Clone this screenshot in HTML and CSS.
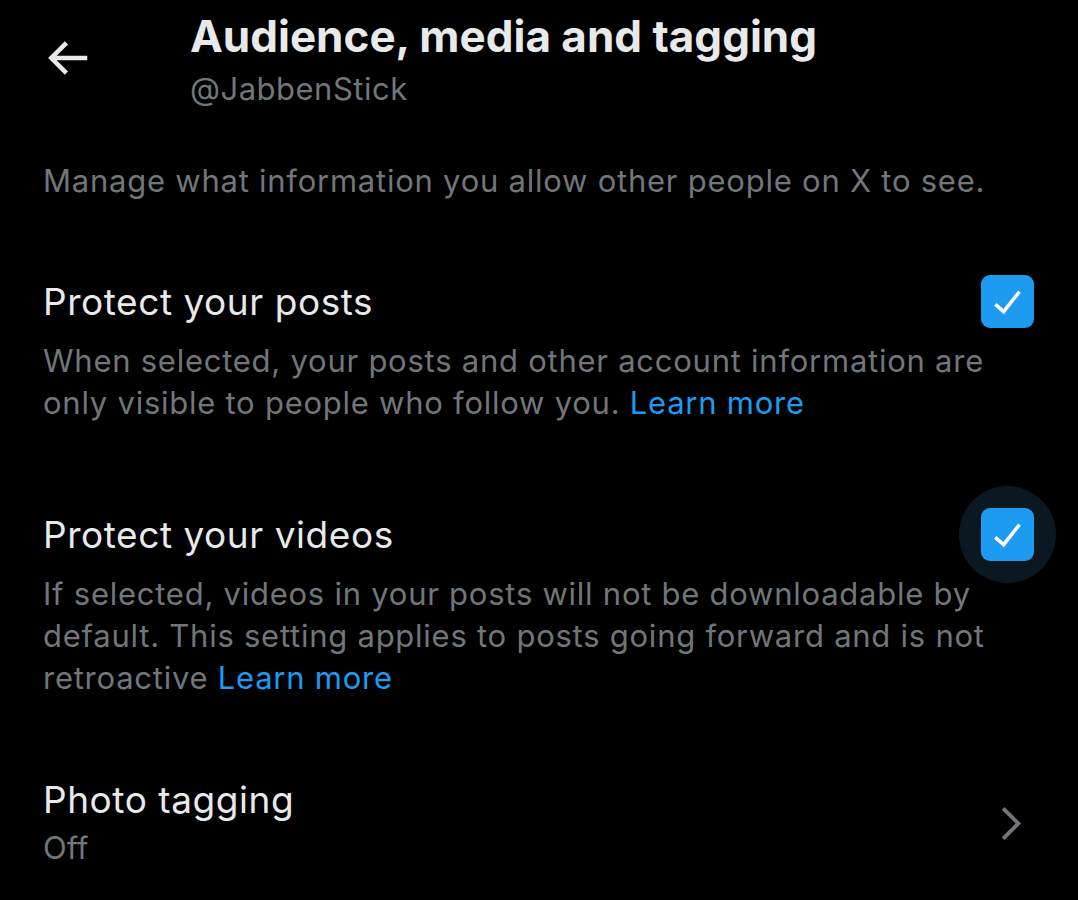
FILE: index.html
```html
<!DOCTYPE html>
<html>
<head>
<meta charset="utf-8">
<link rel="stylesheet" href="styles.css">
</head>
<body>
<div class="page">
  <header class="header">
    <div class="back">
      <svg viewBox="0 0 24 24" width="54" height="54"><path d="M7.414 13l5.043 5.04-1.414 1.42L3.586 12l7.457-7.46 1.414 1.42L7.414 11H21v2H7.414z" fill="#e7e9ea"/></svg>
    </div>
    <div class="titles">
      <div class="title">Audience, media and tagging</div>
      <div class="handle">@JabbenStick</div>
    </div>
  </header>
  <p class="intro">Manage what information you allow other people on X to see.</p>

  <section class="setting">
    <div class="row">
      <div class="label">Protect your posts</div>
      <div class="check-wrap"><div class="check"><svg viewBox="0 0 24 24" width="42" height="42"><path d="M9.64 18.952l-5.55-4.861 1.317-1.504 3.951 3.459 8.402-10.548 1.563 1.246-9.683 12.208z" fill="#fff"/></svg></div></div>
    </div>
    <p class="desc">When selected, your posts and other account information are only visible to people who follow you. <span class="link">Learn more</span></p>
  </section>

  <section class="setting">
    <div class="row">
      <div class="label">Protect your videos</div>
      <div class="check-wrap focused"><div class="check"><svg viewBox="0 0 24 24" width="42" height="42"><path d="M9.64 18.952l-5.55-4.861 1.317-1.504 3.951 3.459 8.402-10.548 1.563 1.246-9.683 12.208z" fill="#fff"/></svg></div></div>
    </div>
    <p class="desc">If selected, videos in your posts will not be downloadable by default. This setting applies to posts going forward and is not retroactive <span class="link">Learn more</span></p>
  </section>

  <section class="nav-row">
    <div>
      <div class="label">Photo tagging</div>
      <div class="sub">Off</div>
    </div>
    <svg class="chev" viewBox="0 0 24 24" width="47" height="47"><path d="M14.586 12L7.543 4.96l1.414-1.42L17.414 12l-8.457 8.46-1.414-1.42L14.586 12z" fill="#71767b"/></svg>
  </section>
</div>
</body>
</html>
```

FILE: styles.css
```css
html, body {
  margin: 0;
  padding: 0;
  background: #000;
}
body {
  font-family: Inter, "Open Sans", "Liberation Sans", sans-serif;
  color: #e7e9ea;
  width: 1078px;
  height: 900px;
  overflow: hidden;
}
.page {
  padding: 0 44px 0 43px;
}
.header {
  display: flex;
  align-items: flex-start;
  padding-top: 10px;
}
.back {
  width: 150px;
  padding-top: 21px;
  margin-left: -3px;
}
.back svg { display: block; }
.title {
  font-size: 44px;
  font-weight: 700;
  line-height: 52px;
}
.handle {
  font-size: 31px;
  color: #71767b;
  line-height: 54px;
  letter-spacing: 0.5px;
}
.intro {
  margin: 44px 0 0;
  font-size: 31px;
  line-height: 42px;
  color: #71767b;
  letter-spacing: 0.76px;
}
.setting {
  margin-top: 76px;
}
.setting + .setting { margin-top: 87px; }
.row {
  display: flex;
  align-items: center;
  justify-content: space-between;
  height: 48px;
}
.label {
  font-size: 37px;
  line-height: 48px;
  color: #e7e9ea;
  letter-spacing: 0.55px;
}
.check-wrap {
  width: 97px;
  height: 97px;
  margin: -25px -22px -24px 0;
  border-radius: 50%;
  display: flex;
  align-items: center;
  justify-content: center;
}
.check-wrap.focused { background: #0b1821; }
.check {
  width: 53px;
  height: 53px;
  border-radius: 9px;
  background: #1d9bf0;
  display: flex;
  align-items: center;
  justify-content: center;
}
.check svg { display: block; }
.desc {
  margin: 14px -20px 0 0;
  font-size: 31px;
  line-height: 42px;
  color: #71767b;
  letter-spacing: 0.75px;
}
.link { color: #1d9bf0; }
.nav-row {
  margin-top: 77px;
  display: flex;
  align-items: center;
  justify-content: space-between;
}
.sub {
  font-size: 31px;
  line-height: 47px;
  color: #71767b;
}
.chev { margin-right: 0; display: block; }
```
